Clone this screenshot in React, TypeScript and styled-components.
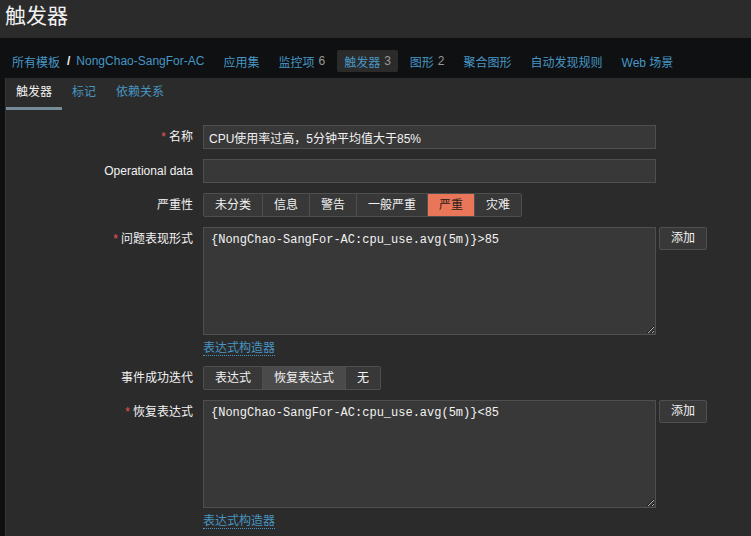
import React from "react";
import styled, { createGlobalStyle, css } from "styled-components";

const Global = createGlobalStyle`
  html, body {
    margin: 0;
    padding: 0;
    background: #0e1012;
    font-family: "Liberation Sans", Arial, "Noto Sans CJK SC", sans-serif;
    font-size: 12px;
    color: #f2f2f2;
  }
  #root { height: 536px; overflow: hidden; }
  * { box-sizing: border-box; }
`;

const Page = styled.div`
  display: flex;
  flex-direction: column;
  height: 536px;
`;

const Header = styled.header`
  height: 38px;
  background: #2b2b2b;
  padding: 4px 0 0 5px;
`;

const Title = styled.h1`
  margin: 0;
  font-size: 21px;
  line-height: 24px;
  font-weight: normal;
  color: #f2f2f2;
`;

const Nav = styled.nav`
  display: flex;
  align-items: center;
  height: 40px;
  padding: 12px 0 6px 5px;
`;

const NavItem = styled.div<{ $active?: boolean }>`
  display: flex;
  align-items: center;
  height: 22px;
  padding: 0 7px;
  margin-right: 5px;
  border-radius: 2px;
  white-space: nowrap;
  ${(p) =>
    p.$active &&
    css`
      background: #2b2b2b;
    `}
`;

const NavLink = styled.span`
  color: #4796c4;
`;

const Count = styled.span`
  color: #999999;
  margin-left: 4px;
`;

const Sep = styled.span`
  color: #f2f2f2;
  font-weight: bold;
  margin: 0 6px 0 7px;
`;

const Panel = styled.main`
  flex: 1;
  margin-left: 5px;
  background: #2b2b2b;
  border-left: 1px solid #363636;
`;

const Tabs = styled.div`
  display: flex;
`;

const Tab = styled.div<{ $active?: boolean }>`
  height: 32px;
  line-height: 29px;
  padding: 0 10px;
  border-bottom: 3px solid ${(p) => (p.$active ? "#768d99" : "transparent")};
  color: ${(p) => (p.$active ? "#f2f2f2" : "#4796c4")};
`;

const Form = styled.div`
  display: grid;
  grid-template-columns: 187px 1fr;
  column-gap: 10px;
  row-gap: 10px;
  padding-top: 15px;
`;

const Label = styled.div<{ $required?: boolean }>`
  text-align: right;
  line-height: 24px;
  color: #f2f2f2;
  white-space: nowrap;
  ${(p) =>
    p.$required &&
    css`
      &::before {
        content: "*";
        color: #e45959;
        margin-right: 3px;
      }
    `}
`;

const Field = styled.div`
  display: flex;
  flex-direction: column;
  align-items: flex-start;
`;

const TextInput = styled.input`
  width: 453px;
  height: 24px;
  background: #383838;
  border: 1px solid #4f4f4f;
  color: #f2f2f2;
  padding: 0 5px;
  font: inherit;
  outline: none;
`;

const Segmented = styled.div`
  display: flex;
  height: 24px;
  border: 1px solid #4f4f4f;
  border-radius: 2px;
  overflow: hidden;
`;

const SegButton = styled.div<{ $selected?: boolean; $tone?: string }>`
  padding: 0 11px;
  line-height: 22px;
  background: ${(p) => p.$tone || (p.$selected ? "#4a4a4a" : "#383838")};
  color: ${(p) => (p.$tone ? "#2b1d1a" : "#f2f2f2")};
  border-right: 1px solid #4f4f4f;
  white-space: nowrap;
  &:last-child {
    border-right: none;
  }
`;

const ExprRow = styled.div`
  display: flex;
  align-items: flex-start;
  gap: 3px;
`;

const TextArea = styled.textarea`
  width: 453px;
  height: 108px;
  background: #383838;
  border: 1px solid #4f4f4f;
  color: #f2f2f2;
  padding: 4px 7px;
  font-family: "Liberation Mono", "Courier New", monospace;
  font-size: 12px;
  line-height: 16px;
  outline: none;
  resize: vertical;
  margin: 0;
  display: block;
`;

const Button = styled.div`
  width: 48px;
  height: 23px;
  line-height: 21px;
  text-align: center;
  background: #383838;
  border: 1px solid #4f4f4f;
  border-radius: 2px;
  color: #f2f2f2;
`;

const Builder = styled.span`
  margin-top: 7px;
  line-height: 13px;
  color: #4796c4;
  border-bottom: 1px dotted #4796c4;
`;

const navItems: { label: string; count?: number; active?: boolean }[] = [
  { label: "应用集" },
  { label: "监控项", count: 6 },
  { label: "触发器", count: 3, active: true },
  { label: "图形", count: 2 },
  { label: "聚合图形" },
  { label: "自动发现规则" },
  { label: "Web 场景" },
];

const severities = ["未分类", "信息", "警告", "一般严重", "严重", "灾难"];

export default function App() {
  return (
    <>
      <Global />
      <Page>
        <Header>
          <Title>触发器</Title>
        </Header>
        <Nav>
          <NavItem>
            <NavLink>所有模板</NavLink>
            <Sep>/</Sep>
            <NavLink>NongChao-SangFor-AC</NavLink>
          </NavItem>
          {navItems.map((n) => (
            <NavItem key={n.label} $active={n.active}>
              <NavLink>{n.label}</NavLink>
              {n.count !== undefined && <Count>{n.count}</Count>}
            </NavItem>
          ))}
        </Nav>
        <Panel>
          <Tabs>
            <Tab $active>触发器</Tab>
            <Tab>标记</Tab>
            <Tab>依赖关系</Tab>
          </Tabs>
          <Form>
            <Label $required>名称</Label>
            <Field>
              <TextInput defaultValue="CPU使用率过高，5分钟平均值大于85%" />
            </Field>

            <Label>Operational data</Label>
            <Field>
              <TextInput defaultValue="" />
            </Field>

            <Label>严重性</Label>
            <Field>
              <Segmented>
                {severities.map((s) => (
                  <SegButton key={s} $tone={s === "严重" ? "#e97659" : undefined}>
                    {s}
                  </SegButton>
                ))}
              </Segmented>
            </Field>

            <Label $required>问题表现形式</Label>
            <Field>
              <ExprRow>
                <TextArea defaultValue="{NongChao-SangFor-AC:cpu_use.avg(5m)}>85" spellCheck={false} />
                <Button>添加</Button>
              </ExprRow>
              <Builder>表达式构造器</Builder>
            </Field>

            <Label>事件成功迭代</Label>
            <Field>
              <Segmented>
                <SegButton>表达式</SegButton>
                <SegButton $selected>恢复表达式</SegButton>
                <SegButton>无</SegButton>
              </Segmented>
            </Field>

            <Label $required>恢复表达式</Label>
            <Field>
              <ExprRow>
                <TextArea defaultValue="{NongChao-SangFor-AC:cpu_use.avg(5m)}<85" spellCheck={false} />
                <Button>添加</Button>
              </ExprRow>
              <Builder>表达式构造器</Builder>
            </Field>
          </Form>
        </Panel>
      </Page>
    </>
  );
}
